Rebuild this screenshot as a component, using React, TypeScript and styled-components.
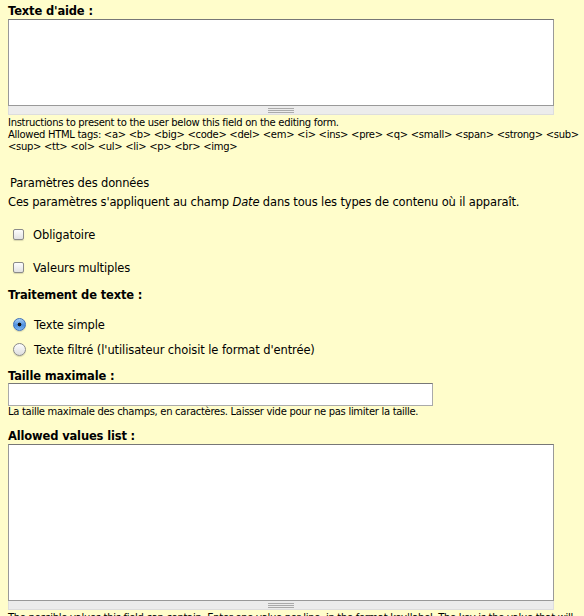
import React from 'react';
import styled, { createGlobalStyle } from 'styled-components';

const GlobalStyle = createGlobalStyle`
    html, body {
        margin: 0;
        padding: 0;
        background: #fffdcb;
    }
    body {
        font-family: "DejaVu Sans", Verdana, sans-serif;
        color: #000;
        overflow: hidden;
    }
`;

const Page = styled.div`
    width: 584px;
    height: 616px;
    overflow: hidden;
    padding: 4px 0 0 8px;
    box-sizing: border-box;
    background: #fffdcb;
`;

const FormItem = styled.div<{ $top?: number }>`
    margin-top: ${(p) => p.$top ?? 0}px;
`;

const Label = styled.div`
    font-weight: bold;
    font-size: 11.5px;
    letter-spacing: -0.15px;
    line-height: 14px;
    height: 14px;
`;

const TextArea = styled.div<{ $height: number }>`
    width: 546px;
    height: ${(p) => p.$height}px;
    box-sizing: border-box;
    background: #fff;
    border: 1px solid #999;
    border-top-color: #777;
    margin-top: 1px;
`;

const Grippie = styled.div`
    width: 546px;
    height: 9px;
    box-sizing: border-box;
    background: #ececec;
    border: 1px solid #ddd;
    border-top: 0;
    display: flex;
    justify-content: center;
    align-items: center;
    &::after {
        content: '';
        width: 26px;
        height: 5px;
        border-top: 1px solid #aaa;
        border-bottom: 1px solid #aaa;
        background: linear-gradient(#aaa, #aaa) center / 100% 1px no-repeat;
        box-sizing: border-box;
    }
`;

const Description = styled.div<{ $top?: number }>`
    font-size: 10px;
    letter-spacing: -0.3px;
    line-height: 12px;
    margin-top: ${(p) => p.$top ?? 2}px;
`;

const Fieldset = styled.div`
    margin-top: 22px;
`;

const Legend = styled.div`
    font-size: 11.5px;
    letter-spacing: -0.15px;
    line-height: 16px;
    padding-left: 2px;
`;

const Intro = styled.p`
    font-size: 11.5px;
    letter-spacing: -0.15px;
    line-height: 16px;
    margin: 3px 0 0;
`;

const Option = styled.label<{ $top: number }>`
    display: flex;
    align-items: center;
    gap: 8px;
    margin-top: ${(p) => p.$top}px;
    padding-left: 5px;
    font-size: 11.5px;
    letter-spacing: -0.1px;
    line-height: 16px;
`;

const Check = styled.span`
    width: 11px;
    height: 11px;
    box-sizing: border-box;
    border: 1px solid #8a8a8a;
    border-radius: 2px;
    background: linear-gradient(#fdfdfd, #e2e2e2);
    box-shadow: 0 1px 1px rgba(0, 0, 0, 0.15);
    margin-right: 1px;
    margin-bottom: 2px;
`;

const Radio = styled.span<{ $on?: boolean }>`
    width: 13px;
    height: 13px;
    box-sizing: border-box;
    border-radius: 50%;
    border: 1px solid ${(p) => (p.$on ? '#3d6fb8' : '#8a8a8a')};
    background: ${(p) =>
        p.$on
            ? 'radial-gradient(circle, #111 0 1.6px, transparent 2.2px), linear-gradient(#a9d0f5, #4c8fe0 55%, #7fb8f0)'
            : 'linear-gradient(#fdfdfd, #dedede)'};
    box-shadow: 0 1px 1px rgba(0, 0, 0, 0.15);
    margin-bottom: 1px;
`;

const TextInput = styled.div`
    width: 425px;
    height: 23px;
    box-sizing: border-box;
    background: #fff;
    border: 1px solid #aaa;
    border-top-color: #777;
`;

export default function App() {
    return (
        <>
            <GlobalStyle />
            <Page>
                <FormItem>
                    <Label>Texte d'aide :</Label>
                    <TextArea $height={87} />
                    <Grippie />
                    <Description>
                        Instructions to present to the user below this field on the editing form.
                        <br />
                        Allowed HTML tags: &lt;a&gt; &lt;b&gt; &lt;big&gt; &lt;code&gt; &lt;del&gt; &lt;em&gt;
                        &lt;i&gt; &lt;ins&gt; &lt;pre&gt; &lt;q&gt; &lt;small&gt; &lt;span&gt; &lt;strong&gt;
                        &lt;sub&gt; &lt;sup&gt; &lt;tt&gt; &lt;ol&gt; &lt;ul&gt; &lt;li&gt; &lt;p&gt; &lt;br&gt;
                        &lt;img&gt;
                    </Description>
                </FormItem>

                <Fieldset>
                    <Legend>Paramètres des données</Legend>
                    <Intro>
                        Ces paramètres s'appliquent au champ <em>Date</em> dans tous les types de
                        contenu où il apparaît.
                    </Intro>
                    <Option $top={17}>
                        <Check />
                        Obligatoire
                    </Option>
                    <Option $top={17}>
                        <Check />
                        Valeurs multiples
                    </Option>

                    <FormItem $top={12}>
                        <Label>Traitement de texte :</Label>
                        <Option $top={15}>
                            <Radio $on />
                            Texte simple
                        </Option>
                        <Option $top={9}>
                            <Radio />
                            Texte filtré (l'utilisateur choisit le format d'entrée)
                        </Option>
                    </FormItem>

                    <FormItem $top={11}>
                        <Label>Taille maximale :</Label>
                        <TextInput />
                        <Description $top={0}>
                            La taille maximale des champs, en caractères. Laisser vide pour ne pas
                            limiter la taille.
                        </Description>
                    </FormItem>

                    <FormItem $top={11}>
                        <Label>Allowed values list :</Label>
                        <TextArea $height={157} />
                        <Grippie />
                        <Description>
                            The possible values this field can contain. Enter one value per line, in
                            the format key|label. The key is the value that will be stored in the
                            database, and it must match the field storage type.
                        </Description>
                    </FormItem>
                </Fieldset>
            </Page>
        </>
    );
}
